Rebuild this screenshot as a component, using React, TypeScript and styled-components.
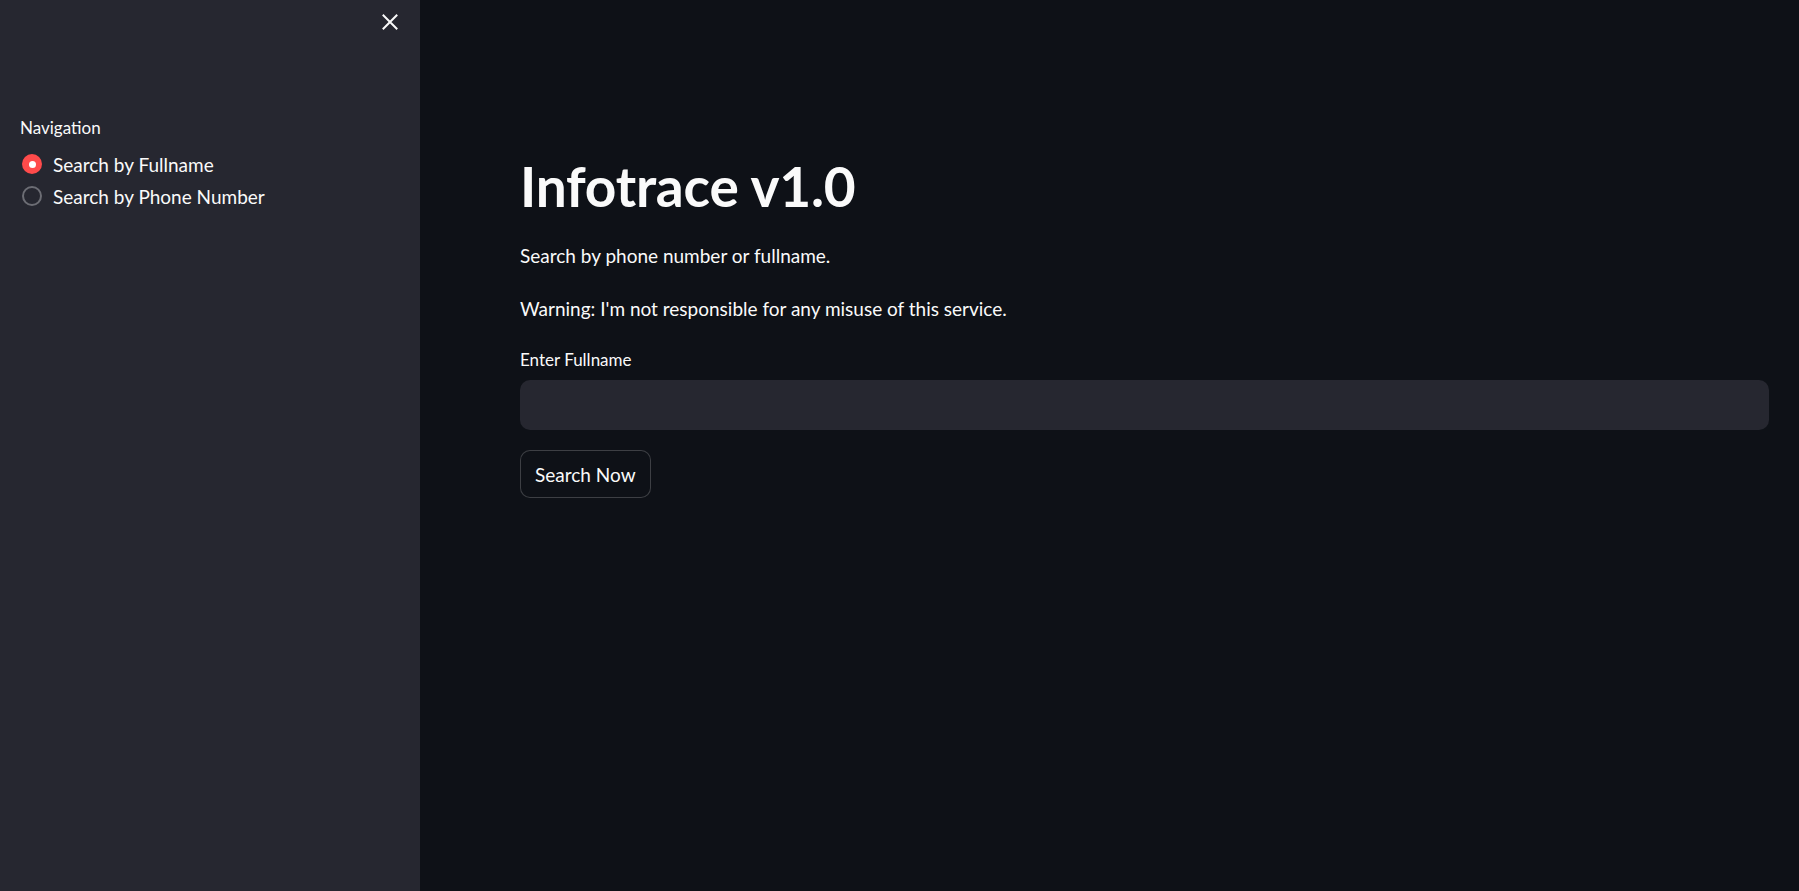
import React from "react";
import styled, { createGlobalStyle } from "styled-components";

const GlobalStyle = createGlobalStyle`
  html, body { margin: 0; padding: 0; background: #0e1117; }
  body { font-family: "Lato", "Noto Sans", sans-serif; color: #fafafa; }
  * { box-sizing: border-box; }
`;

const Layout = styled.div`
  display: flex;
  width: 100%;
  height: 891px;
  overflow: hidden;
`;

const Sidebar = styled.aside`
  position: relative;
  width: 420px;
  flex: 0 0 420px;
  background: #262730;
  padding: 117px 20px 0 20px;
`;

const CloseButton = styled.button`
  position: absolute;
  top: 13px;
  right: 21px;
  width: 18px;
  height: 18px;
  padding: 0;
  border: none;
  background: transparent;
  color: #fafafa;
  display: flex;
  align-items: center;
  justify-content: center;
  cursor: pointer;
`;

const WidgetLabel = styled.div<{ $gap?: number }>`
  font-size: 17px;
  line-height: 22px;
  color: #fafafa;
  margin-bottom: ${(p) => p.$gap ?? 0}px;
`;

const RadioGroup = styled.div`
  display: flex;
  flex-direction: column;
  gap: 4px;
`;

const RadioRow = styled.label`
  display: flex;
  align-items: center;
  height: 28px;
  gap: 11px;
  font-size: 19px;
  color: #fafafa;
  cursor: pointer;
`;

const RadioDot = styled.span<{ $checked: boolean }>`
  width: 20px;
  height: 20px;
  border-radius: 50%;
  margin-left: 2px;
  display: flex;
  align-items: center;
  justify-content: center;
  background: ${(p) => (p.$checked ? "#ff4b4b" : "transparent")};
  border: ${(p) => (p.$checked ? "none" : "2px solid #6c6d74")};
  &::after {
    content: "";
    width: 7px;
    height: 7px;
    border-radius: 50%;
    background: #ffffff;
    display: ${(p) => (p.$checked ? "block" : "none")};
  }
`;

const Main = styled.main`
  flex: 1;
  padding: 152px 30px 0 100px;
`;

const Title = styled.h1`
  margin: 0;
  font-size: 55px;
  font-weight: 700;
  line-height: 68px;
  letter-spacing: -0.2px;
  color: #fafafa;
`;

const Paragraph = styled.p`
  margin: 0;
  font-size: 19px;
  line-height: 32px;
  color: #fafafa;
`;

const TextBlock = styled.div`
  display: flex;
  flex-direction: column;
  gap: 21px;
  margin-top: 20px;
`;

const Field = styled.div`
  margin-top: 24px;
  display: flex;
  flex-direction: column;
  gap: 9px;
`;

const Input = styled.input`
  height: 50px;
  width: 100%;
  border: none;
  border-radius: 10px;
  background: #262730;
  color: #fafafa;
  font: inherit;
  font-size: 19px;
  padding: 0 16px;
  outline: none;
`;

const Button = styled.button`
  margin-top: 20px;
  height: 48px;
  padding: 0 14px;
  border-radius: 10px;
  border: 1px solid rgba(250, 250, 250, 0.2);
  background: #0e1117;
  color: #fafafa;
  font-family: inherit;
  font-size: 19px;
  cursor: pointer;
`;

export default function App() {
  return (
    <>
      <GlobalStyle />
      <Layout>
        <Sidebar>
          <CloseButton aria-label="Close sidebar">
            <svg width="16" height="16" viewBox="0 0 16 16" fill="none">
              <path d="M1.5 1.5 L14.5 14.5 M14.5 1.5 L1.5 14.5" stroke="#fafafa" strokeWidth="2" strokeLinecap="square" />
            </svg>
          </CloseButton>
          <WidgetLabel $gap={11}>Navigation</WidgetLabel>
          <RadioGroup>
            <RadioRow>
              <RadioDot $checked={true} />
              Search by Fullname
            </RadioRow>
            <RadioRow>
              <RadioDot $checked={false} />
              Search by Phone Number
            </RadioRow>
          </RadioGroup>
        </Sidebar>
        <Main>
          <Title>Infotrace v1.0</Title>
          <TextBlock>
            <Paragraph>Search by phone number or fullname.</Paragraph>
            <Paragraph>Warning: I'm not responsible for any misuse of this service.</Paragraph>
          </TextBlock>
          <Field>
            <WidgetLabel>Enter Fullname</WidgetLabel>
            <Input type="text" />
          </Field>
          <Button>Search Now</Button>
        </Main>
      </Layout>
    </>
  );
}
